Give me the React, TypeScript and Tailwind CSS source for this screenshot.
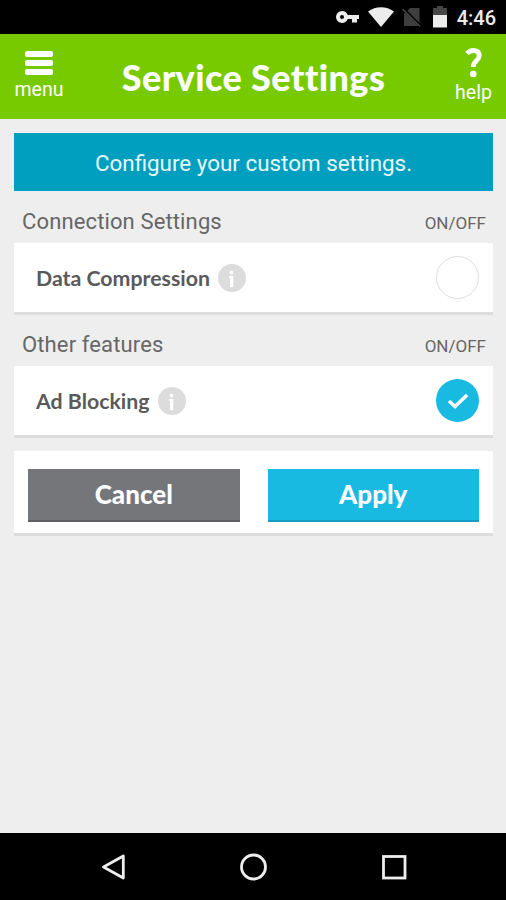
import React, { useState } from "react";

const StatusBar = () => (
  <div className="flex h-[34px] shrink-0 items-center justify-end bg-black pr-[10px] text-[#ececec]">
    <svg className="mr-[8px] h-[12px] w-[24px]" viewBox="0 0 24 12" fill="currentColor">
      <path
        fillRule="evenodd"
        d="M6 0a6 6 0 1 0 5.700 8H16v3.500h5V8h2V4H11.700A6 6 0 0 0 6 0zm0 4a2 2 0 1 1 0 4 2 2 0 0 1 0-4z"
      />
    </svg>
    <svg className="mr-[8px] h-[20px] w-[26px]" viewBox="0 0 26 20" fill="currentColor">
      <path d="M13 20L0 4.500C7.500-1.200 18.500-1.200 26 4.500z" />
    </svg>
    <svg className="mr-[11px] h-[20px] w-[20px]" viewBox="0 0 20 20">
      <path d="M8 1h9.500v18H2V7z" fill="#3e3e3e" />
      <path d="M1 1.500l18 18" stroke="#000" strokeWidth="3" />
      <path d="M0.500 2l17.500 17.500" stroke="#4a4a4a" strokeWidth="1.500" />
    </svg>
    <svg className="mr-[10px] h-[22px] w-[14px]" viewBox="0 0 14 22">
      <path d="M4 0h6v2h4v8H0V2h4z" fill="#474747" />
      <path d="M0 9h14v12.500H0z" fill="#ececec" />
    </svg>
    <span className="pt-[1px] font-['Roboto',sans-serif] text-[20px] leading-none font-medium">4:46</span>
  </div>
);

const Header = () => (
  <header className="flex h-[85px] shrink-0 justify-between bg-[#77ca00] text-white">
    <button className="flex w-[78px] flex-col items-center pt-[17px]">
      <span className="flex flex-col gap-[3px]">
        <span className="h-[6px] w-[28px] rounded-[2px] bg-white" />
        <span className="h-[6px] w-[28px] rounded-[2px] bg-white" />
        <span className="h-[6px] w-[28px] rounded-[2px] bg-white" />
      </span>
      <span className="mt-[4px] font-['Roboto',sans-serif] text-[19.500px] leading-[22px]">menu</span>
    </button>
    <h1 className="mr-[12px] pt-[22px] font-['Lato',sans-serif] text-[36px] leading-[42px] font-black tracking-[0.4px] whitespace-nowrap [font-variant-ligatures:none]">
      Service Settings
    </h1>
    <button className="flex w-[65px] flex-col items-center pt-[14px]">
      <svg className="ml-[2px] h-[30px] w-[18px]" viewBox="0 0 18 30" fill="none">
        <path
          d="M2 5.500C6 1 14.500 1.500 14.200 8c-0.300 5.200-5.900 4.500-5.900 11"
          stroke="#fff"
          strokeWidth="4.800"
        />
        <circle cx="8.300" cy="26" r="3.300" fill="#fff" />
      </svg>
      <span className="mt-[4px] font-['Roboto',sans-serif] text-[19.500px] leading-[22px]">help</span>
    </button>
  </header>
);

const InfoIcon = () => (
  <svg className="h-[28px] w-[28px]" viewBox="0 0 28 28">
    <circle cx="14" cy="14" r="14" fill="#dcdcdc" />
    <circle cx="13.500" cy="8.500" r="1.900" fill="#fff" />
    <path d="M11 12h4.300v11h-3.300v-9h-1z" fill="#fff" />
  </svg>
);

const Toggle = ({ checked, onChange, label }) => (
  <button
    role="switch"
    aria-checked={checked}
    aria-label={label}
    onClick={() => onChange(!checked)}
    className={`flex h-[43px] w-[43px] items-center justify-center rounded-full ${
      checked ? "bg-[#19bae1]" : "border-[1.5px] border-[#dedede] bg-white"
    }`}
  >
    {checked && (
      <svg className="h-[18px] w-[22px]" viewBox="0 0 22 18" fill="none">
        <path d="M2 9l6 5.500L20 3" stroke="#fff" strokeWidth="3.500" />
      </svg>
    )}
  </button>
);

const SettingRow = ({ section, name, checked, onChange, className }) => (
  <section className={className}>
    <div className="flex h-[52px] items-center justify-between pr-[7px] pl-[8px] font-['Roboto',sans-serif] text-[#666]">
      <h2 className="pt-[9px] text-[22px] leading-[26px] tracking-[0.13px]">{section}</h2>
      <span className="pt-[12px] text-[17px] leading-[20px]">ON/OFF</span>
    </div>
    <div className="flex h-[72px] items-center justify-between border-b-[3px] border-[#dcdcdc] bg-white pr-[14px] pl-[22px]">
      <div className="flex items-center gap-[8px]">
        <span className="pt-[1px] font-['Lato',sans-serif] text-[21.300px] leading-[28px] font-bold text-[#5a5a5a]">
          {name}
        </span>
        <InfoIcon />
      </div>
      <Toggle checked={checked} onChange={onChange} label={name} />
    </div>
  </section>
);

const NavBar = () => (
  <nav className="flex h-[67px] shrink-0 items-center justify-between bg-black pr-[98px] pl-[99px]">
    <svg className="h-[28px] w-[28px]" viewBox="0 0 28 28" fill="none" stroke="#eee" strokeWidth="2.800">
      <path d="M24.300 3v22L4.500 14z" strokeLinejoin="round" />
    </svg>
    <svg className="h-[28px] w-[28px]" viewBox="0 0 28 28" fill="none" stroke="#eee" strokeWidth="2.800">
      <circle cx="13.500" cy="14" r="12" />
    </svg>
    <svg className="h-[28px] w-[28px]" viewBox="0 0 28 28" fill="none" stroke="#eee" strokeWidth="2.800">
      <rect x="3.500" y="3.500" width="21.500" height="21.500" />
    </svg>
  </nav>
);

const App = () => {
  const [compression, setCompression] = useState(false);
  const [adBlocking, setAdBlocking] = useState(true);

  return (
    <div className="flex h-screen flex-col bg-[#eee]">
      <StatusBar />
      <Header />
      <main className="flex-1 pt-[14px] pr-[13px] pl-[14px]">
        <p className="flex h-[58px] items-center justify-center bg-[#009fbf] pt-[2px] font-['Roboto',sans-serif] text-[22.400px] leading-[28px] text-[#e6f9fc]">
          Configure your custom settings.
        </p>
        <SettingRow
          section="Connection Settings"
          name="Data Compression"
          checked={compression}
          onChange={setCompression}
          className=""
        />
        <SettingRow
          section="Other features"
          name="Ad Blocking"
          checked={adBlocking}
          onChange={setAdBlocking}
          className="-mt-[1px]"
        />
        <div className="mt-[13px] grid h-[85px] grid-cols-2 gap-[28px] border-b-[3px] border-[#dcdcdc] bg-white px-[14px] pt-[18px] font-['Lato',sans-serif] text-[26px] font-black text-white">
          <button className="h-[53px] border-b-2 border-[#606164] bg-[#757679]">Cancel</button>
          <button className="h-[53px] border-b-2 border-[#129fc2] bg-[#19bae1]">Apply</button>
        </div>
      </main>
      <NavBar />
    </div>
  );
};

export default App;
